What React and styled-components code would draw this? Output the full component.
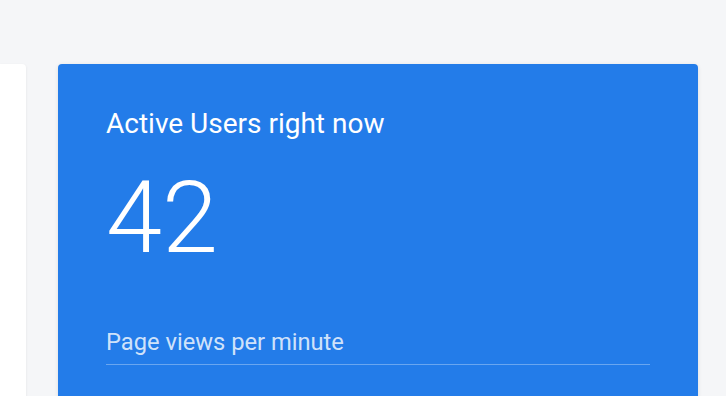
import React from "react";
import styled, { createGlobalStyle } from "styled-components";

const GlobalStyle = createGlobalStyle`
  html, body { margin: 0; padding: 0; background: #f5f6f8; overflow: hidden; }
  body { font-family: Roboto, "Noto Sans", "Liberation Sans", sans-serif; }
`;

const Page = styled.div`
  display: flex;
  align-items: flex-start;
  gap: 32px;
  padding-top: 64px;
  height: 396px;
  box-sizing: border-box;
  overflow: hidden;
`;

const SideCard = styled.div`
  width: 26px;
  height: 400px;
  background: #ffffff;
  border-radius: 0 4px 0 0;
  box-shadow: 0 1px 3px rgba(0, 0, 0, 0.08);
  flex-shrink: 0;
`;

const StatCard = styled.section`
  width: 640px;
  height: 400px;
  flex-shrink: 0;
  box-sizing: border-box;
  background: #237ce9;
  border-radius: 4px;
  box-shadow: 0 1px 4px rgba(0, 0, 0, 0.1);
  padding: 44px 48px 0 48px;
  color: #ffffff;
  display: flex;
  flex-direction: column;
`;

const Title = styled.h2`
  margin: 0;
  font-size: 28px;
  font-weight: 400;
  line-height: 32px;
`;

const BigNumber = styled.div`
  font-size: 101px;
  font-weight: 300;
  line-height: 101px;
  margin-top: 27px;
`;

const SubTitle = styled.div`
  margin-top: 60px;
  font-size: 23.7px;
  font-weight: 400;
  line-height: 28px;
  color: rgba(255, 255, 255, 0.8);
  padding-bottom: 8px;
  border-bottom: 1px solid rgba(255, 255, 255, 0.32);
`;

export default function App() {
  return (
    <>
      <GlobalStyle />
      <Page>
        <SideCard />
        <StatCard>
          <Title>Active Users right now</Title>
          <BigNumber>42</BigNumber>
          <SubTitle>Page views per minute</SubTitle>
        </StatCard>
      </Page>
    </>
  );
}
